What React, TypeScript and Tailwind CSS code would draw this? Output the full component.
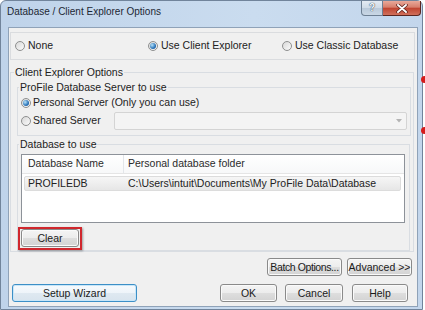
import React from "react";

function Radio({ checked }: { checked?: boolean }) {
  return (
    <span className="w-[10px] h-[10px] rounded-full border border-[#8e8f8f] bg-gradient-to-br from-[#d8d8d8] to-[#fbfbfb] flex items-center justify-center shrink-0">
      {checked && (
        <span className="w-[6px] h-[6px] rounded-full bg-[radial-gradient(circle_at_35%_35%,#b8e4fa,#2a73b8_60%,#184c86)]" />
      )}
    </span>
  );
}

function Btn({ className, children }: { className: string; children: React.ReactNode }) {
  return (
    <div
      className={
        "h-[18px] rounded-[3px] border border-[#8a8a8a] bg-[linear-gradient(#f4f4f4_0%,#ececec_50%,#dedede_50%,#d3d3d3_100%)] shadow-[inset_0_0_0_1px_#fafafa] flex items-center justify-center text-[#1a1a1a] leading-[12px] whitespace-nowrap shrink-0 " +
        className
      }
    >
      {children}
    </div>
  );
}

export default function App() {
  return (
    <div
      className="w-[425px] h-[310px] bg-white relative overflow-hidden text-[10.5px] text-[#222]"
      style={{ fontFamily: '"Liberation Sans", Arial, sans-serif' }}
    >
      <div className="w-[423px] h-[310px] flex flex-col border border-[#71849b] rounded-t-[6px] bg-[linear-gradient(90deg,#bfd3ea_0%,#cadcef_60%,#c3d6ec_100%)]">
        {/* title bar */}
        <div className="h-[26px] flex items-start justify-between shrink-0">
          <div className="pl-[6px] pt-[5px] text-[10px] leading-[12px] text-[#1c2733]">
            Database / Client Explorer Options
          </div>
          <div className="flex mr-[1px]">
            <div className="w-[22px] h-[15px] border border-[#6d7f93] border-t-0 rounded-bl-[4px] bg-[linear-gradient(#e4ebf3_0%,#cfdbe7_50%,#b9c9da_50%,#c9d7e5_100%)] flex items-center justify-center text-[10px] font-bold leading-[10px] text-[#f5f8fb] [text-shadow:0_0_1px_#34465a,0_0_1px_#34465a]">
              ?
            </div>
            <div className="w-[38px] h-[15px] border border-[#5b2620] border-t-0 border-l-0 rounded-br-[4px] bg-[linear-gradient(#e9a99a_0%,#d77e6b_45%,#c0432f_50%,#d0705b_100%)] flex items-center justify-center">
              <svg width="12" height="9" viewBox="0 0 12 9">
                <path d="M2 1 L10 8 M10 1 L2 8" stroke="#5a1f18" strokeWidth="3.4" strokeLinecap="round" />
                <path d="M2 1 L10 8 M10 1 L2 8" stroke="#ffffff" strokeWidth="1.9" strokeLinecap="round" />
              </svg>
            </div>
          </div>
        </div>

        {/* client area */}
        <div className="ml-[7px] w-[410px] h-[280px] border border-[#8fa2b8] bg-[#f0f0f0] flex flex-col shrink-0">
          {/* radios panel */}
          <div className="mt-[4px] ml-[1px] w-[405px] h-[28px] border border-[#dadcdf] flex items-center pl-[4px] shrink-0">
            <div className="w-[133px] flex items-center gap-[3px]">
              <Radio />
              <span>None</span>
            </div>
            <div className="w-[134px] flex items-center gap-[3px]">
              <Radio checked />
              <span>Use Client Explorer</span>
            </div>
            <div className="flex items-center gap-[3px]">
              <Radio />
              <span>Use Classic Database</span>
            </div>
          </div>

          {/* Client Explorer Options */}
          <fieldset className="mt-[6px] ml-[1px] w-[404px] border border-[#d9dde2] pl-[3px] shrink-0">
            <legend className="px-[1px] leading-[13px]">Client Explorer Options</legend>

            <fieldset className="mt-[2px] ml-[3px] w-[394px] border border-[#d9dde2] pl-[1px] pb-[5px]">
              <legend className="px-[1px] leading-[13px]">ProFile Database Server to use</legend>
              <div className="mt-[1px] ml-[2px] h-[16px] flex items-center gap-[2px]">
                <Radio checked />
                <span>Personal Server (Only you can use)</span>
              </div>
              <div className="mt-[1px] ml-[2px] h-[18px] flex items-center">
                <div className="w-[93px] flex items-center gap-[2px]">
                  <Radio />
                  <span>Shared Server</span>
                </div>
                <div className="w-[293px] h-[18px] border border-[#d4d4d4] rounded-[2px] bg-[#f4f4f4] flex items-center justify-end pr-[4px]">
                  <svg width="6" height="4" viewBox="0 0 6 4">
                    <path d="M0 0 H6 L3 3.5 Z" fill="#b4b4b4" />
                  </svg>
                </div>
              </div>
            </fieldset>

            <fieldset className="mt-[2px] ml-[3px] w-[393px] border border-[#d9dde2] pl-[1px]">
              <legend className="px-[1px] leading-[13px]">Database to use</legend>
              <div className="mt-[3px] ml-[2px] w-[384px] h-[69px] border border-[#8d9299] bg-white flex flex-col">
                <div className="h-[19px] flex items-center border-b border-[#e5e5e5] bg-[linear-gradient(#ffffff,#f7f8f9)] text-[#2b2b2b] shrink-0">
                  <div className="w-[101px] h-full flex items-center pl-[6px]">Database Name</div>
                  <div className="w-[1px] h-full bg-[#e3e6ea]" />
                  <div className="pl-[4px]">Personal database folder</div>
                </div>
                <div className="mt-[2px] ml-[2px] w-[377px] h-[15px] rounded-[2px] border border-[#dcdcdc] bg-[linear-gradient(#f6f6f6,#e6e6e6)] flex items-center shrink-0">
                  <div className="w-[100px] pl-[3px]">PROFILEDB</div>
                  <div className="pl-[3px]">C:\Users\intuit\Documents\My ProFile Data\Database</div>
                </div>
              </div>
              <div className="mt-[4px] -ml-[1px] w-[64px] h-[23px] border-2 border-[#d0272d] shadow-[1px_1px_2px_rgba(0,0,0,0.35)] flex items-start pl-[1px]">
                <Btn className="w-[58px]">Clear</Btn>
              </div>
            </fieldset>
          </fieldset>

          {/* batch / advanced */}
          <div className="mt-[6px] mr-[5px] flex justify-end gap-[5px] shrink-0">
            <Btn className="w-[75px] tracking-[-0.4px]">Batch Options...</Btn>
            <Btn className="w-[65px]">Advanced &gt;&gt;</Btn>
          </div>

          {/* bottom row */}
          <div className="mt-[8px] flex items-center shrink-0">
            <div className="ml-[3px] w-[125px] h-[18px] rounded-[3px] border border-[#3c8fc7] bg-[linear-gradient(#f6fafd_0%,#eef4f9_50%,#dfe9f1_50%,#d8e4ee_100%)] shadow-[inset_0_0_0_1px_#c8e6f8] flex items-center justify-center leading-[12px] text-[#1a1a1a]">
              Setup Wizard
            </div>
            <div className="ml-auto mr-[9px] flex">
              <Btn className="w-[57px]">OK</Btn>
              <Btn className="ml-[8px] w-[58px]">Cancel</Btn>
              <Btn className="ml-[9px] w-[56px]">Help</Btn>
            </div>
          </div>
        </div>
      </div>

      {/* annotation dots */}
      <div className="absolute left-[421px] top-[76px] w-[7px] h-[7px] rounded-full bg-[#d51b1b]" />
      <div className="absolute left-[421px] top-[127px] w-[7px] h-[7px] rounded-full bg-[#d51b1b]" />
    </div>
  );
}
